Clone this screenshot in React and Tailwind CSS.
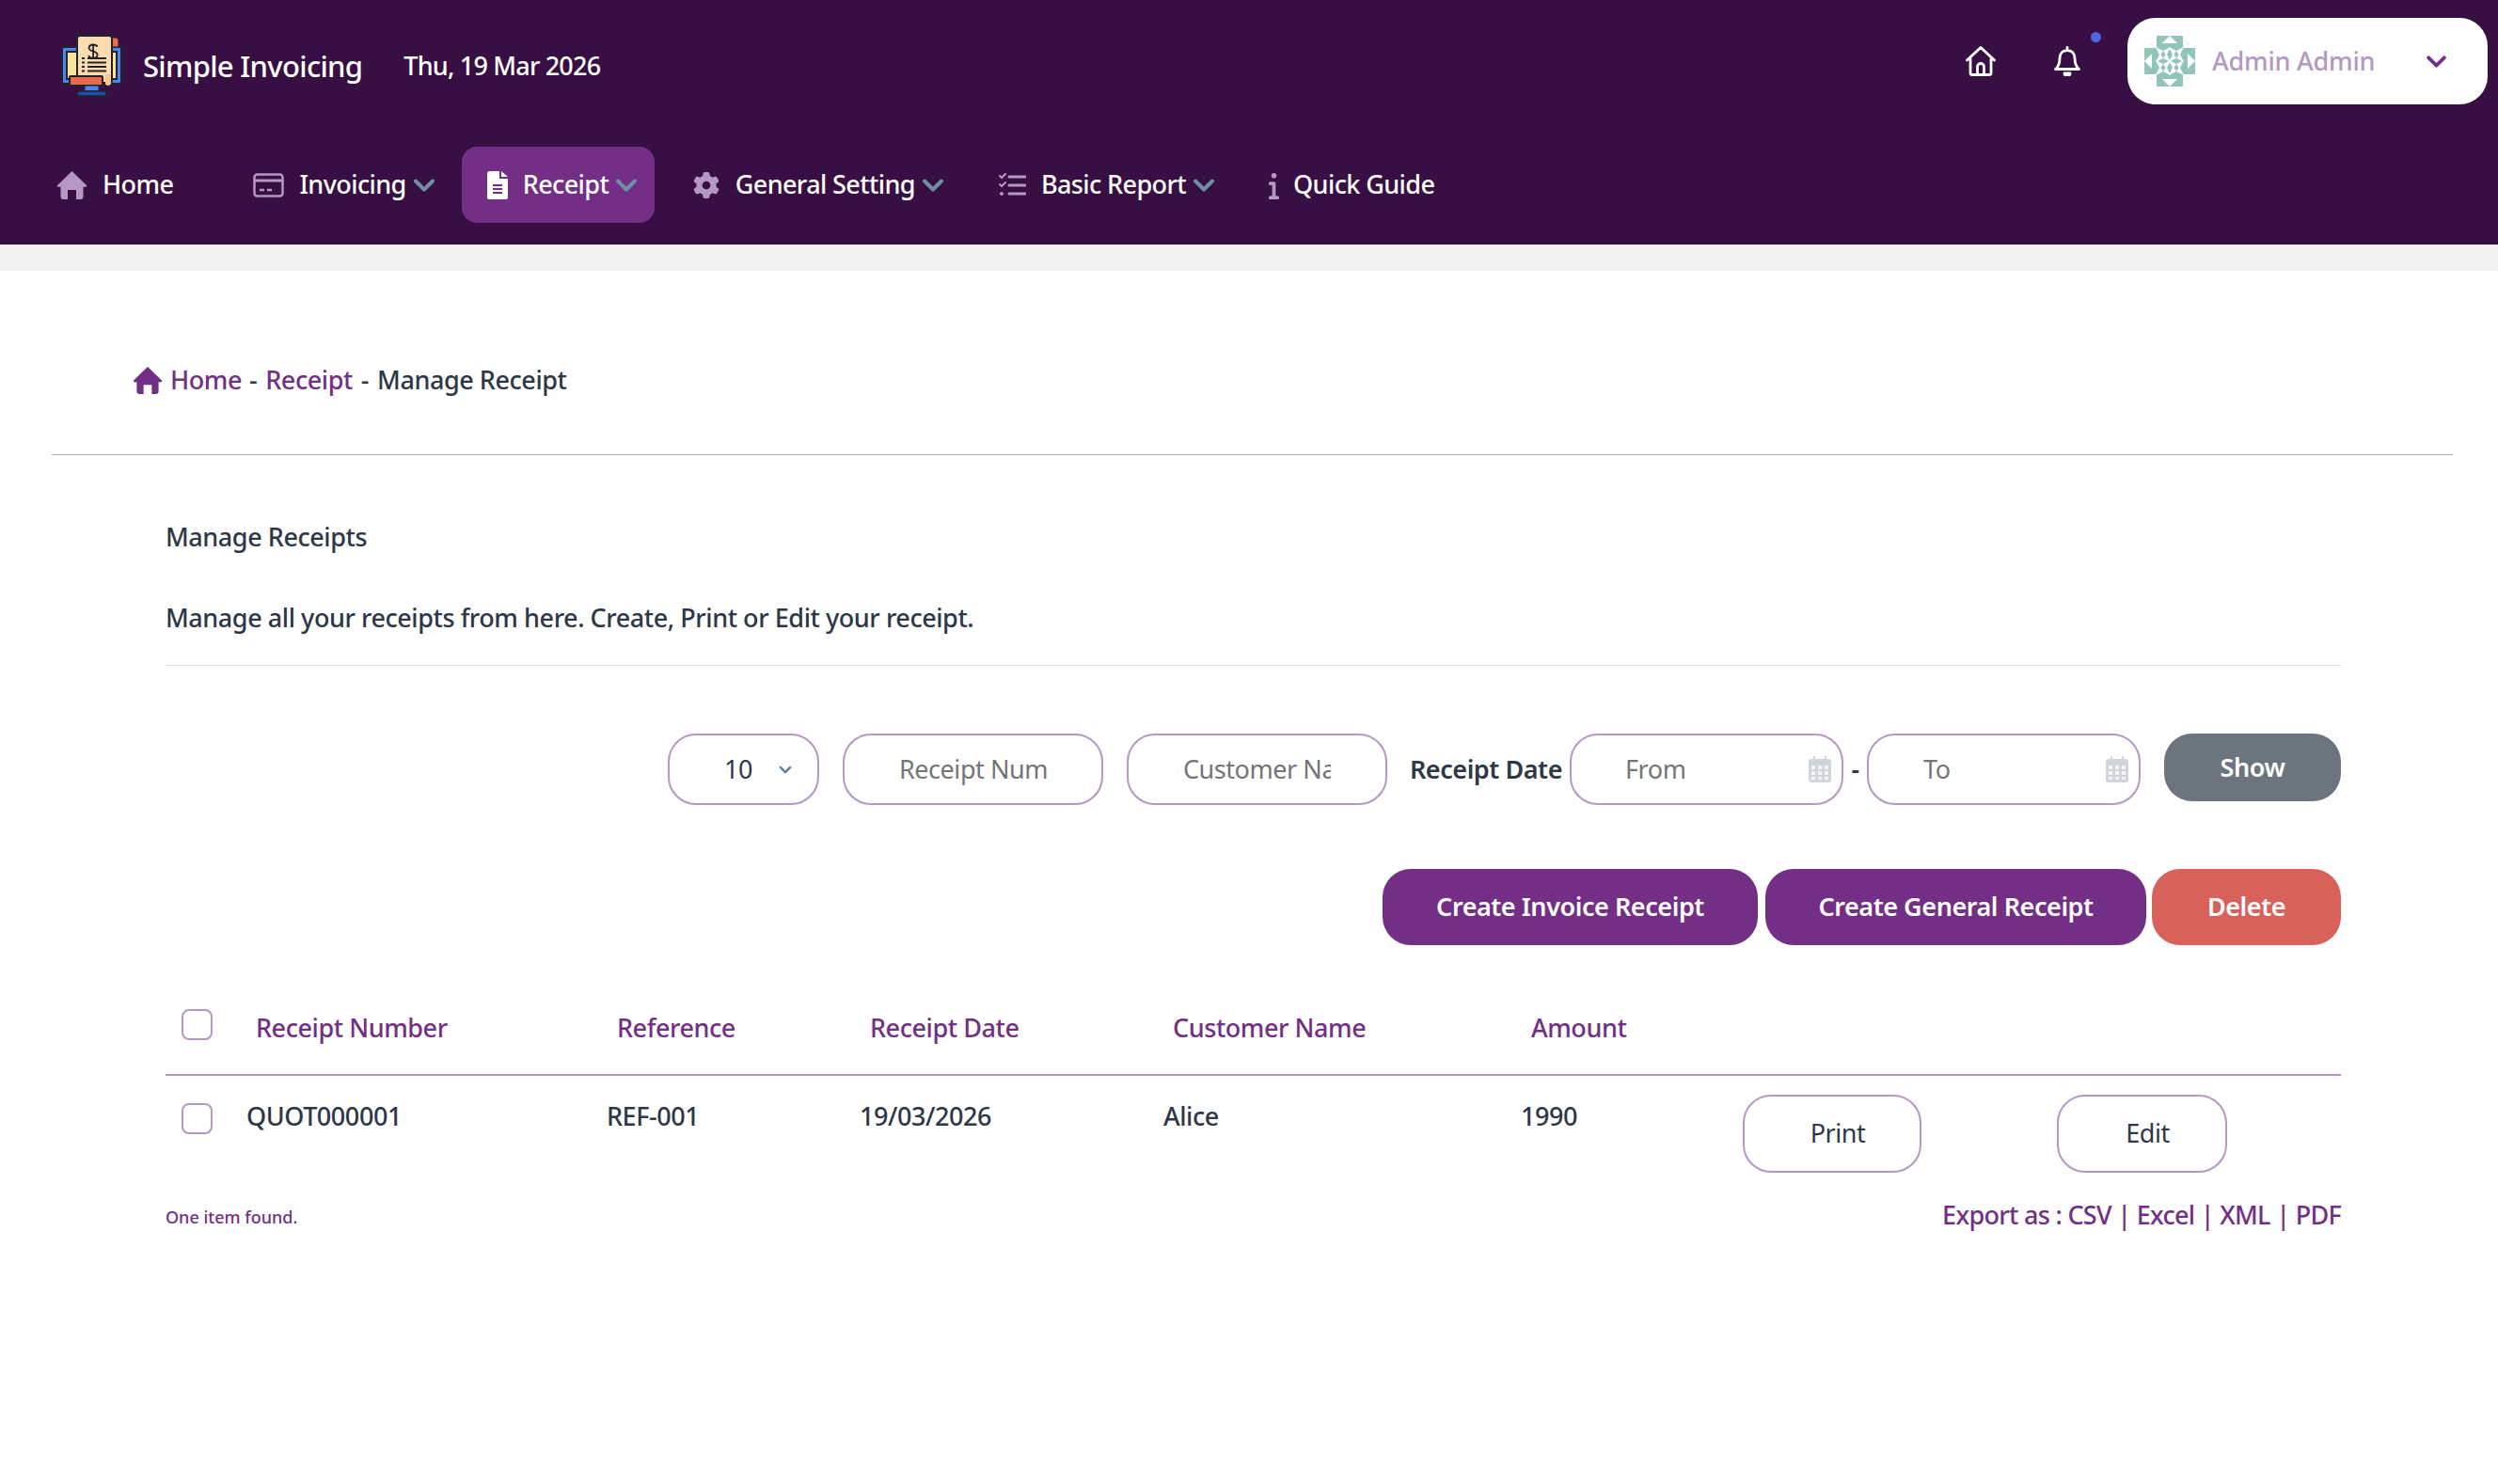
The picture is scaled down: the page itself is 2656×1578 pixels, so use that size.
import React from "react";
import { FaGear, FaInfo } from "react-icons/fa6";

const Chevron = ({ className }) => (
  <svg viewBox="0 0 24 14" fill="none" className={className}>
    <path d="M3 2.500 12 11.500 21 2.500" stroke="currentColor" strokeWidth="4" strokeLinecap="round" strokeLinejoin="round" />
  </svg>
);

const Logo = () => (
  <svg viewBox="0 0 65 66" className="w-[65px] h-[66px] shrink-0">
    <rect x="1" y="13" width="63" height="39" rx="2" fill="#4a86ee" stroke="#22222e" strokeWidth="2" />
    <rect x="6" y="18" width="53" height="29" fill="#fbe49a" stroke="#22222e" strokeWidth="2" />
    <path d="M54 3h4a3 3 0 0 1 3 3v7h-7z" fill="#e9694a" stroke="#22222e" strokeWidth="1" />
    <rect x="17" y="1" width="37" height="50" rx="3" fill="#fbdcae" stroke="#22222e" strokeWidth="2" />
    <path d="M47 42h6v9a3 3 0 0 1-6 0z" fill="#f5c98d" />
    <path d="M34 9v18M39 12.500c-1-2-3-2.500-5-2.500-3 0-5 1.500-5 4 0 5 10 3 10 8 0 2.500-2 4-5 4-2.500 0-4.500-1-5.500-3" fill="none" stroke="#22222e" strokeWidth="2" transform="translate(3.500 1.500) scale(.9)" />
    <path d="M22 25h3M28 25h20M22 29.500h3M28 29.500h20M22 34h3M28 34h20M22 38.500h3M28 38.500h20" stroke="#22222e" strokeWidth="2" />
    <rect x="9" y="44" width="35" height="10" rx="1" fill="#e9694a" stroke="#22222e" strokeWidth="2" />
    <rect x="25" y="54" width="15" height="6" fill="#4a86ee" stroke="#22222e" strokeWidth="1" />
    <path d="M17 65v-2a3 3 0 0 1 3-3h25a3 3 0 0 1 3 3v2z" fill="#1d4fa3" stroke="#22222e" strokeWidth="1.500" />
  </svg>
);

const stars = [
  [20, 20],
  [34, 20],
  [20, 34],
  [34, 34],
];

const Avatar = () => (
  <svg viewBox="0 0 54 54" className="w-[54px] h-[54px] shrink-0">
    <path d="M13 1a1 1 0 0 1 1-1h26a1 1 0 0 1 1 1v12h12a1 1 0 0 1 1 1v26a1 1 0 0 1-1 1H41v12a1 1 0 0 1-1 1H14a1 1 0 0 1-1-1V41H1a1 1 0 0 1-1-1V14a1 1 0 0 1 1-1h12z" fill="#93c4b9" />
    <path d="M27 0l8 8H19zM27 54l8-8H19zM0 27l8-8v16zM54 27l-8-8v16z" fill="#fff" />
    {stars.map(([x, y]) => (
      <g key={`${x}-${y}`}>
        <path d={`M${x - 8} ${y - 8}l8 4 8-4-4 8 4 8-8-4-8 4 4-8z`} fill="#fff" />
        <path d={`M${x} ${y - 4}l2.500 4-2.500 4-2.500-4z`} fill="#93c4b9" />
      </g>
    ))}
    <path d="M6 10l3-3M48 10l-3-3M6 44l3 3M48 44l-3 3" stroke="#cfe3de" strokeWidth="1" />
  </svg>
);

const HomeSolid = ({ className }) => (
  <svg viewBox="0 0 32 30" fill="currentColor" className={className}>
    <path d="M16 0 31.500 15a1 1 0 0 1-.7 1.700H28V27a3 3 0 0 1-3 3h-4.500V20h-9v10H7a3 3 0 0 1-3-3V16.700H1.200A1 1 0 0 1 .5 15z" />
  </svg>
);

const CalendarIcon = () => (
  <svg viewBox="0 0 24 28" className="w-[24px] h-[28px] shrink-0">
    <path d="M5 0h2v4H5zM17 0h2v4h-2z" fill="#d1d5db" />
    <rect x="0" y="3" width="24" height="25" rx="3" fill="#d1d5db" />
    <path d="M3 10h4v4H3zM10 10h4v4h-4zM17 10h4v4h-4zM3 16h4v4H3zM10 16h4v4h-4zM17 16h4v4h-4zM3 22h4v3H3zM10 22h4v3h-4zM17 22h4v3h-4z" fill="#f3f4f6" />
  </svg>
);

const body = "text-[27px] tracking-[-0.44px]";

const NavItem = ({ icon, label, chevron, className = "" }) => (
  <div className={`flex items-center h-[81px] ${className}`}>
    {icon}
    <span className="text-white text-[27px] tracking-[-0.6px] font-medium whitespace-nowrap">{label}</span>
    {chevron && <Chevron className="w-[24px] h-[14px] ml-[7px] text-[#6f8fa8]" />}
  </div>
);

const inputBox = `h-[76px] rounded-[30px] border-2 border-[#b497c4] bg-white flex items-center ${body}`;
const field = "w-full min-w-0 bg-transparent outline-none placeholder:text-[#757575]";
const headCell = `${body} font-medium text-[#722f85]`;
const rowCell = `${body} font-medium text-[#2d3748]`;

export default function App() {
  return (
    <div className="min-h-[1578px] bg-white font-['Noto_Sans',sans-serif]">
      {/* top bar */}
      <div className="h-[260px] bg-[#380f42]">
        <div className="flex h-[156px]">
          <div className="flex items-center h-[140px] pl-[65px]">
            <Logo />
            <span className="ml-[22px] text-white text-[31px] tracking-[-0.7px] font-medium whitespace-nowrap">Simple Invoicing</span>
            <span className="ml-[44px] text-white text-[27px] tracking-[-0.8px] font-medium whitespace-nowrap">Thu, 19 Mar 2026</span>
          </div>
          <div className="ml-auto flex items-start pr-[11px]">
            <svg viewBox="0 0 32 32" fill="none" stroke="white" strokeWidth="2.800" strokeLinejoin="round" strokeLinecap="round" className="w-[32px] h-[32px] mt-[49px]">
              <path d="M1.500 15 16 1.500 30.500 15M5 13v15.500a2 2 0 0 0 2 2h18a2 2 0 0 0 2-2V13M12.500 30v-8a3.500 3.500 0 0 1 7 0v8" />
            </svg>
            <div className="relative ml-[62px] mr-[50px] mt-[49px]">
              <svg viewBox="0 0 28 32" fill="none" stroke="white" strokeWidth="2.800" strokeLinejoin="round" strokeLinecap="round" className="w-[28px] h-[32px]">
                <path d="M14 1.500v3M14 4.500c-5 0-8 3.500-8 8.500 0 6-1.500 9-4.500 11.500h25C23.500 22 22 19 22 13c0-5-3-8.500-8-8.500zM11 29a3 3 0 0 0 6 0z" />
              </svg>
              <span className="absolute top-[-15px] right-[-22px] w-[11px] h-[11px] rounded-full bg-[#4a66e0]" />
            </div>
            <div className="mt-[19px] w-[383px] h-[92px] rounded-[30px] bg-white flex items-center pl-[18px]">
              <Avatar />
              <span className="ml-[18px] text-[27px] tracking-[-0.2px] font-medium text-[#b497c4] whitespace-nowrap">Admin Admin</span>
              <Chevron className="ml-auto mr-[43px] w-[23px] h-[13px] text-[#722f85]" />
            </div>
          </div>
        </div>
        <nav className="flex pl-[60px]">
          <NavItem label="Home" icon={<HomeSolid className="w-[33px] h-[30px] mr-[16px] text-[#b497c4]" />} />
          <NavItem
            label="Invoicing"
            chevron
            className="ml-[85px]"
            icon={
              <svg viewBox="0 0 33 26" fill="none" stroke="#b497c4" strokeWidth="2.500" className="w-[33px] h-[26px] mr-[16px]">
                <rect x="1.500" y="1.500" width="30" height="23" rx="3" />
                <path d="M1.500 8h30" strokeWidth="3" />
                <path d="M7 18h5M15 18h5" strokeWidth="2.500" />
              </svg>
            }
          />
          <div className="ml-[28px] w-[205px] h-[81px] rounded-[16px] bg-[#722f85] pl-[27px]">
            <NavItem
              label="Receipt"
              chevron
              icon={
                <svg viewBox="0 0 22 30" className="w-[22px] h-[30px] mr-[16px]">
                  <path d="M2.500 0H13v8h9v19.500a2.500 2.500 0 0 1-2.500 2.500h-17A2.500 2.500 0 0 1 0 27.500v-25A2.500 2.500 0 0 1 2.500 0zM15 0l7 6h-7z" fill="#fff" />
                  <path d="M6 15h10M6 19h10M6 23h10" stroke="#722f85" strokeWidth="2" />
                </svg>
              }
            />
          </div>
          <NavItem label="General Setting" chevron className="ml-[41px]" icon={<FaGear className="w-[28px] h-[30px] mr-[17px] text-[#b497c4]" />} />
          <NavItem
            label="Basic Report"
            chevron
            className="ml-[58px]"
            icon={
              <svg viewBox="0 0 29 26" fill="none" stroke="#b497c4" strokeLinecap="round" className="w-[29px] h-[26px] mr-[16px]">
                <path d="M11 4h17M11 13h17M11 22h17" strokeWidth="3" />
                <path d="M1 3l2 2 4-4M1 12l2 2 4-4" strokeWidth="2" />
                <circle cx="3" cy="22" r="1.500" fill="#b497c4" strokeWidth="1" />
              </svg>
            }
          />
          <NavItem label="Quick Guide" className="ml-[56px]" icon={<FaInfo className="w-[13px] h-[30px] mr-[14px] text-[#b497c4]" />} />
        </nav>
      </div>
      <div className="h-[28px] bg-[#f3f3f3]" />

      {/* breadcrumb */}
      <div className={`pt-[96px] pl-[141px] h-[136px] flex items-start ${body} font-medium text-[#722f85]`}>
        <div className="flex items-center h-[40px] whitespace-nowrap">
          <HomeSolid className="w-[32px] h-[29px] mr-[8px]" />
          <span>Home</span>
          <span className="ml-[8px] text-[#2d3748]">-</span>
          <span className="ml-[9px]">Receipt</span>
          <span className="ml-[9px] text-[#2d3748]">-</span>
          <span className="ml-[9px] text-[#2d3748]">Manage Receipt</span>
        </div>
      </div>
      <div className="ml-[55px] mr-[48px] mt-[59px] h-px bg-[#b3a4bd]" />

      <div className="pl-[176px] pr-[167px]">
        <p className={`mt-[67px] h-[40px] leading-[40px] ${body} font-medium text-[#2d3748]`}>Manage Receipts</p>
        <p className={`mt-[46px] h-[40px] leading-[40px] ${body} font-medium text-[#2d3748]`}>
          Manage all your receipts from here. Create, Print or Edit your receipt.
        </p>
        <div className="mt-[30px] h-px bg-[#dddddd]" />

        {/* filters */}
        <div className="mt-[72px] flex items-start justify-end">
          <div className={`${inputBox} w-[161px] pl-[58px] text-[#2d3748]`}>
            <span>10</span>
            <Chevron className="ml-[28px] w-[14px] h-[9px] text-[#5f7f9c]" />
          </div>
          <div className={`${inputBox} w-[277px] ml-[25px] px-[58px]`}>
            <input className={field} placeholder="Receipt Number" />
          </div>
          <div className={`${inputBox} w-[277px] ml-[25px] px-[58px]`}>
            <input className={field} placeholder="Customer Name" />
          </div>
          <span className={`ml-[24px] h-[76px] leading-[76px] ${body} font-semibold text-[#2d3748] whitespace-nowrap`}>Receipt Date</span>
          <div className={`${inputBox} w-[291px] ml-[8px] pl-[57px] pr-[11px]`}>
            <input className={field} placeholder="From" />
            <CalendarIcon />
          </div>
          <span className={`w-[25px] h-[76px] leading-[76px] text-center ${body} font-semibold text-[#2d3748]`}>-</span>
          <div className={`${inputBox} w-[291px] pl-[58px] pr-[11px]`}>
            <input className={field} placeholder="To" />
            <CalendarIcon />
          </div>
          <button className={`ml-[25px] w-[188px] h-[72px] rounded-[30px] bg-[#6c757d] text-white ${body} font-semibold`}>Show</button>
        </div>

        {/* actions */}
        <div className="mt-[68px] flex justify-end">
          <button className={`w-[399px] h-[81px] rounded-[30px] bg-[#722f85] text-white ${body} font-semibold`}>Create Invoice Receipt</button>
          <button className={`ml-[8px] w-[405px] h-[81px] rounded-[30px] bg-[#722f85] text-white ${body} font-semibold`}>Create General Receipt</button>
          <button className={`ml-[6px] w-[201px] h-[81px] rounded-[30px] bg-[#d9615c] text-white ${body} font-semibold`}>Delete</button>
        </div>

        {/* table head */}
        <div className="mt-[68px] h-[69px] flex items-start border-b-2 border-[#b497c4] box-content">
          <span className="ml-[17px] w-[33px] h-[33px] rounded-[8px] border-2 border-[#b497c4]" />
          <span className={`${headCell} ml-[46px] w-[384px]`}>Receipt Number</span>
          <span className={`${headCell} w-[269px]`}>Reference</span>
          <span className={`${headCell} w-[322px]`}>Receipt Date</span>
          <span className={`${headCell} w-[381px]`}>Customer Name</span>
          <span className={headCell}>Amount</span>
        </div>

        {/* table row */}
        <div className="h-[106px] flex items-start">
          <span className="mt-[29px] ml-[17px] w-[33px] h-[33px] rounded-[8px] border-2 border-[#b497c4]" />
          <span className={`${rowCell} mt-[23px] ml-[36px] w-[383px]`}>QUOT000001</span>
          <span className={`${rowCell} mt-[23px] w-[269px]`}>REF-001</span>
          <span className={`${rowCell} mt-[23px] w-[323px]`}>19/03/2026</span>
          <span className={`${rowCell} mt-[23px] w-[380px]`}>Alice</span>
          <span className={`${rowCell} mt-[23px] w-[236px] -tracking-[1px]`}>1990</span>
          <button className={`mt-[20px] w-[190px] h-[83px] rounded-[30px] border-2 border-[#b497c4] ${body} text-[#2d3748] pl-[12px]`}>Print</button>
          <button className={`mt-[20px] ml-[144px] w-[181px] h-[83px] rounded-[30px] border-2 border-[#b497c4] ${body} text-[#2d3748] pl-[12px]`}>Edit</button>
        </div>

        {/* footer */}
        <div className="flex items-center justify-between mt-[22px] h-[40px]">
          <span className="text-[18px] font-medium text-[#722f85] mt-[4px]">One item found.</span>
          <span className="text-[27px] tracking-[-0.7px] font-medium text-[#722f85]">Export as : CSV | Excel | XML | PDF</span>
        </div>
      </div>
    </div>
  );
}
